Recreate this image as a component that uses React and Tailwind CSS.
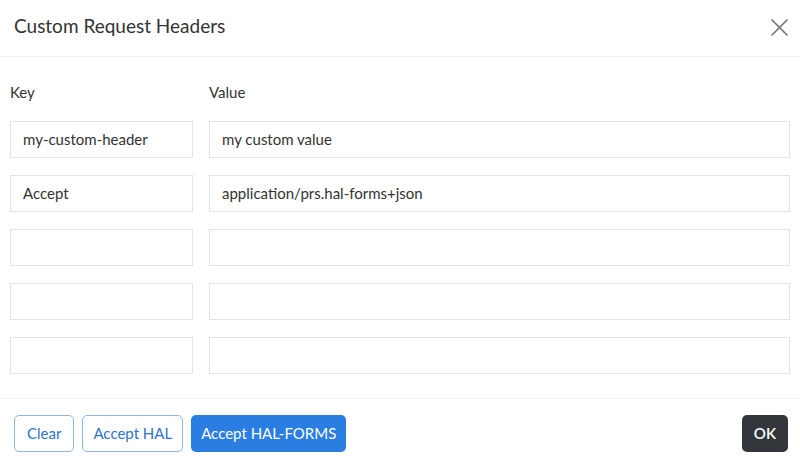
import React, { useState } from "react";

const initialRows = [
  { key: "my-custom-header", value: "my custom value" },
  { key: "Accept", value: "application/prs.hal-forms+json" },
  { key: "", value: "" },
  { key: "", value: "" },
  { key: "", value: "" },
];

export default function App() {
  const [rows, setRows] = useState(initialRows);

  const update = (i, field, val) => {
    setRows(rows.map((r, idx) => (idx === i ? { ...r, [field]: val } : r)));
  };

  return (
    <div className="w-[800px] h-[466px] bg-white text-[#333] font-['Lato',sans-serif] flex flex-col">
      {/* Header */}
      <div className="h-[57px] flex items-center justify-between pl-[14px] pr-[12px] pb-[4px] border-b border-[#f0f0f0]">
        <h1 className="text-[19px] text-[#333]">Custom Request Headers</h1>
        <button className="text-[#777] mt-[2px]">
          <svg width="17" height="17" viewBox="0 0 17 17" fill="none" stroke="currentColor" strokeWidth="1.7" strokeLinecap="round">
            <line x1="1" y1="1" x2="16" y2="16" />
            <line x1="16" y1="1" x2="1" y2="16" />
          </svg>
        </button>
      </div>

      {/* Body */}
      <div className="flex-1 px-[10px] pt-[24px]">
        <div className="grid grid-cols-[183px_1fr] gap-x-[16px] text-[15px] mb-[17px]">
          <div>Key</div>
          <div>Value</div>
        </div>
        <div className="flex flex-col gap-[17px]">
          {rows.map((r, i) => (
            <div key={i} className="grid grid-cols-[183px_1fr] gap-x-[16px]">
              <input
                value={r.key}
                onChange={(e) => update(i, "key", e.target.value)}
                className="h-[37px] border border-[#e3e3e3] px-[12px] text-[15px] text-[#333] outline-none"
              />
              <input
                value={r.value}
                onChange={(e) => update(i, "value", e.target.value)}
                className="h-[37px] border border-[#e3e3e3] px-[12px] text-[15px] text-[#333] outline-none"
              />
            </div>
          ))}
        </div>
      </div>

      {/* Footer */}
      <div className="h-[68px] border-t border-[#f0f0f0] flex items-center justify-between pl-[14px] pr-[12px] pt-[2px]">
        <div className="flex gap-[8px]">
          <button className="h-[37px] px-[12px] rounded-[5px] border border-[#8fb6e8] text-[#2f73c9] text-[15px]">
            Clear
          </button>
          <button className="h-[37px] px-[10px] rounded-[5px] border border-[#8fb6e8] text-[#2f73c9] text-[15px]">
            Accept HAL
          </button>
          <button className="h-[37px] px-[10px] rounded-[5px] bg-[#2a7de1] text-white text-[15px]">
            Accept HAL-FORMS
          </button>
        </div>
        <button className="h-[37px] px-[12px] rounded-[5px] bg-[#33373b] text-white text-[15px] font-semibold">
          OK
        </button>
      </div>
    </div>
  );
}
